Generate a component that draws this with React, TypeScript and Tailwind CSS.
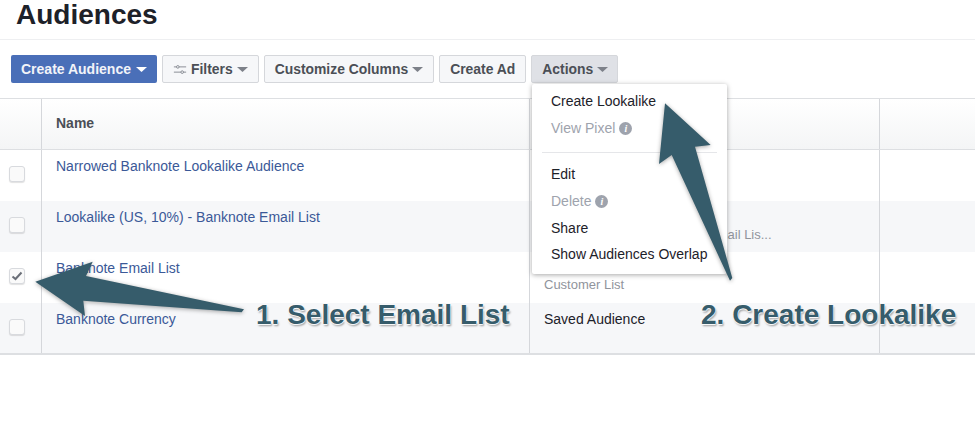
import React from "react";

function Caret({ className }: { className: string }) {
  return (
    <svg width="11" height="5" viewBox="0 0 11 5" className={className}>
      <path d="M0 0H11L5.5 5Z" fill="currentColor" />
    </svg>
  );
}

function Info() {
  return (
    <span className="inline-flex h-[13px] w-[13px] items-center justify-center rounded-full bg-[#9ea3ad] font-['Liberation_Serif',serif] text-[10px] font-bold italic leading-none text-white">
      i
    </span>
  );
}

function Btn({ children, active }: { children: React.ReactNode; active?: boolean }) {
  return (
    <div
      className={`flex h-[28px] items-center gap-[4px] rounded-[2px] border border-[#d5d7db] pl-[10px] text-[13.9px] font-bold text-[#4b4f56] ${
        active ? "bg-[#dfe1e6] pr-[9px]" : "bg-[#f6f7f9] pr-[10px]"
      }`}
    >
      {children}
    </div>
  );
}

function Box({ checked }: { checked?: boolean }) {
  return (
    <div className="flex h-[16px] w-[16px] items-center justify-center rounded-[3px] border border-[#d8dade] bg-[#fafafa] shadow-[0_1px_1px_rgba(0,0,0,0.12)]">
      {checked && (
        <svg width="12" height="10" viewBox="0 0 12 10">
          <path d="M1.5 5.5L4.5 8L10.5 1.5" fill="none" stroke="#6b6f78" strokeWidth="2" />
        </svg>
      )}
    </div>
  );
}

function Row({
  name,
  type,
  alt,
  checked,
  h,
  typeClass,
  typeTop,
}: {
  name: string;
  type?: string;
  alt?: boolean;
  checked?: boolean;
  h: string;
  typeClass?: string;
  typeTop?: string;
}) {
  return (
    <div className={`flex ${h} ${alt ? "bg-[#f6f7f9]" : "bg-white"}`}>
      <div className="flex w-[42px] shrink-0 items-center justify-center border-r border-[#d5d7db] pb-[3px] pr-[7px]">
        <Box checked={checked} />
      </div>
      <div className="w-[488px] shrink-0 border-r border-[#d5d7db] pl-[14px] pt-[7px] text-[14px] leading-[18px] text-[#3b5998]">
        {name}
      </div>
      <div className={`w-[350px] shrink-0 border-r border-[#d5d7db] pl-[14px] ${typeTop ?? "pt-[7px]"} ${typeClass ?? ""}`}>
        {type}
      </div>
      <div className="flex-1" />
    </div>
  );
}

function MenuItem({ children, off }: { children: React.ReactNode; off?: boolean }) {
  return (
    <div className={`flex h-[27px] items-center gap-[4px] pl-[19px] text-[14px] ${off ? "text-[#9ea3ad]" : "text-[#1d2129]"}`}>
      {children}
    </div>
  );
}

const label =
  "absolute whitespace-nowrap text-[28px] font-bold leading-[32px] text-[#365c6b] [text-shadow:0_0_1px_#fff,0_0_2px_#fff,0_1px_1px_#fff,1px_2px_2px_rgba(0,0,0,0.4)]";

export default function App() {
  return (
    <div className="relative h-[421px] w-[975px] overflow-hidden bg-white font-['Liberation_Sans',Arial,sans-serif]">
      <div className="h-[40px] border-b border-[#eeeff1] pl-[16px] pt-[1px]">
        <h1 className="text-[28px] font-bold leading-[28px] text-[#1d2129]">Audiences</h1>
      </div>
      <div className="flex h-[58px] items-start gap-[5px] pl-[11px] pt-[15px]">
        <div className="flex h-[28px] items-center gap-[5px] rounded-[2px] bg-[#4a6fb8] px-[10px] text-[14px] font-bold text-[#f2f4f8]">
          Create Audience
          <Caret className="text-white" />
        </div>
        <Btn>
          <svg width="14" height="11" viewBox="0 0 16 11" fill="none" stroke="#7d8189" strokeWidth="1">
            <path d="M1 2.5H4M7 2.5H15M1 8.5H9M12 8.5H15" />
            <circle cx="5.5" cy="2.5" r="1.5" />
            <circle cx="10.5" cy="8.5" r="1.5" />
          </svg>
          Filters
          <Caret className="text-[#7d8189]" />
        </Btn>
        <Btn>
          Customize Columns
          <Caret className="text-[#7d8189]" />
        </Btn>
        <Btn>Create Ad</Btn>
        <Btn active>
          Actions
          <Caret className="text-[#7d8189]" />
        </Btn>
      </div>

      <div className="flex h-[52px] border-y border-[#dddfe2] bg-gradient-to-b from-white to-[#f4f5f6]">
        <div className="w-[42px] shrink-0 border-r border-[#d5d7db]" />
        <div className="flex w-[488px] shrink-0 items-center border-r border-[#d5d7db] pb-[2px] pl-[14px] text-[14px] font-bold text-[#4b4f56]">
          Name
        </div>
        <div className="w-[350px] shrink-0 border-r border-[#d5d7db]" />
        <div className="flex-1" />
      </div>
      <Row h="h-[51px]" name="Narrowed Banknote Lookalike Audience" />
      <Row
        h="h-[51px]"
        alt
        name="Lookalike (US, 10%) - Banknote Email List"
        type="Lookalike (USA) - Banknote Email Lis..."
        typeClass="text-[13px] leading-[16px] text-[#90949c]"
        typeTop="pt-[26px]"
      />
      <Row
        h="h-[51px]"
        checked
        name="Banknote Email List"
        type="Customer List"
        typeClass="text-[13px] leading-[16px] text-[#90949c]"
        typeTop="pt-[25px]"
      />
      <Row
        h="h-[50px]"
        alt
        name="Banknote Currency"
        type="Saved Audience"
        typeClass="text-[14px] leading-[18px] text-[#1d2129]"
      />
      <div className="h-[2px] bg-[#dddfe2]" />

      <div className="absolute left-[532px] top-[84px] h-[190px] w-[195px] rounded-[2px] bg-white pt-[4px] shadow-[0_1px_5px_rgba(0,0,0,0.35)]">
        <MenuItem>Create Lookalike</MenuItem>
        <MenuItem off>
          View Pixel <Info />
        </MenuItem>
        <div className="mx-[10px] mb-[8px] mt-[10px] h-px bg-[#e5e6e9]" />
        <MenuItem>Edit</MenuItem>
        <MenuItem off>
          Delete <Info />
        </MenuItem>
        <MenuItem>Share</MenuItem>
        <div className="-mt-px">
          <MenuItem>Show Audiences Overlap</MenuItem>
        </div>
      </div>

      <svg width="975" height="421" viewBox="0 0 975 421" className="pointer-events-none absolute left-0 top-0 drop-shadow-[0_1px_2px_rgba(0,0,0,0.35)]">
        <path d="M35.3 281.7L92.7 261.7L86 276L244 309.3L241.7 312.3L83.3 300.7L85 316Z" fill="#365c6b" />
        <path d="M665 103.3L710.7 145L695 146.7L732.3 278L730 280.7L671.7 155L659 164Z" fill="#365c6b" />
      </svg>

      <div className={`${label} left-[256px] top-[299px]`}>1. Select Email List</div>
      <div className={`${label} left-[701px] top-[299px]`}>2. Create Lookalike</div>
    </div>
  );
}
